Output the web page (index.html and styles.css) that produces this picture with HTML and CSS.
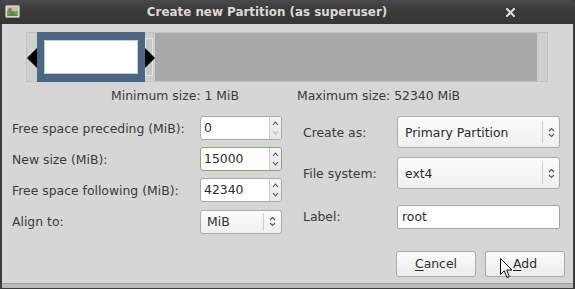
FILE: index.html
```html
<!DOCTYPE html>
<html>
<head>
<meta charset="utf-8">
<link rel="stylesheet" href="styles.css">
</head>
<body>
<div class="window">
  <div class="titlebar">
    <svg class="app-icon" width="15" height="13" viewBox="0 0 15 13">
      <rect x="0.5" y="0.5" width="14" height="12" rx="1" fill="#d8d8d8" stroke="#9a9a9a"/>
      <rect x="2" y="2" width="11" height="9" fill="#6fae4c"/>
      <rect x="2" y="2" width="11" height="4" fill="#9cc7e0"/>
      <circle cx="5" cy="5" r="2" fill="#e0533a"/>
      <path d="M2 11 L7 6 L13 11 Z" fill="#4f8f35"/>
      <circle cx="10" cy="4" r="1.3" fill="#f0c040"/>
    </svg>
    <div class="title">Create new Partition (as superuser)</div>
    <svg class="close" width="9" height="9" viewBox="0 0 9 9">
      <path d="M1 1 L8 8 M8 1 L1 8" stroke="#dcdcdc" stroke-width="2.2" stroke-linecap="square"/>
    </svg>
  </div>

  <div class="client">
    <div class="bar">
      <div class="bar-pre"></div>
      <div class="bar-part"><div class="bar-inner"></div></div>
      <div class="bar-gap"><div class="bar-gap-inner"></div></div>
      <div class="bar-free"></div>
      <div class="bar-end"></div>
      <svg class="handle handle-left" width="10" height="20" viewBox="0 0 10 20"><path d="M0 10 L10 0 L10 20 Z" fill="#000"/></svg>
      <svg class="handle handle-right" width="10" height="20" viewBox="0 0 10 20"><path d="M10 10 L0 0 L0 20 Z" fill="#000"/></svg>
    </div>

    <div class="sizes">
      <div>Minimum size: 1 MiB</div>
      <div>Maximum size: 52340 MiB</div>
    </div>

    <div class="form">
      <div class="col-left">
        <div class="label">Free space preceding (MiB):</div>
        <div class="spin">
          <div class="spin-val">0</div>
          <div class="spin-btns">
            <svg width="7" height="5" viewBox="0 0 7 5"><path d="M1 4 L3.5 1.2 L6 4" fill="none" stroke="#555" stroke-width="1.1"/></svg>
            <svg width="7" height="5" viewBox="0 0 7 5"><path d="M1 1 L3.5 3.8 L6 1" fill="none" stroke="#bbb" stroke-width="1.1"/></svg>
          </div>
        </div>

        <div class="label">New size (MiB):</div>
        <div class="spin focused">
          <div class="spin-val">15000</div>
          <div class="spin-btns">
            <svg width="7" height="5" viewBox="0 0 7 5"><path d="M1 4 L3.5 1.2 L6 4" fill="none" stroke="#555" stroke-width="1.1"/></svg>
            <svg width="7" height="5" viewBox="0 0 7 5"><path d="M1 1 L3.5 3.8 L6 1" fill="none" stroke="#555" stroke-width="1.1"/></svg>
          </div>
        </div>

        <div class="label">Free space following (MiB):</div>
        <div class="spin">
          <div class="spin-val">42340</div>
          <div class="spin-btns">
            <svg width="7" height="5" viewBox="0 0 7 5"><path d="M1 4 L3.5 1.2 L6 4" fill="none" stroke="#555" stroke-width="1.1"/></svg>
            <svg width="7" height="5" viewBox="0 0 7 5"><path d="M1 1 L3.5 3.8 L6 1" fill="none" stroke="#555" stroke-width="1.1"/></svg>
          </div>
        </div>

        <div class="label">Align to:</div>
        <div class="combo small">
          <div class="combo-val">MiB</div>
          <div class="combo-arrow">
            <svg width="7" height="11" viewBox="0 0 7 11"><path d="M1 4 L3.5 1.5 L6 4 M1 7 L3.5 9.5 L6 7" fill="none" stroke="#555" stroke-width="1.1"/></svg>
          </div>
        </div>
      </div>

      <div class="col-right">
        <div class="label">Create as:</div>
        <div class="combo">
          <div class="combo-val">Primary Partition</div>
          <div class="combo-arrow">
            <svg width="7" height="11" viewBox="0 0 7 11"><path d="M1 4 L3.5 1.5 L6 4 M1 7 L3.5 9.5 L6 7" fill="none" stroke="#555" stroke-width="1.1"/></svg>
          </div>
        </div>

        <div class="label">File system:</div>
        <div class="combo">
          <div class="combo-val">ext4</div>
          <div class="combo-arrow">
            <svg width="7" height="11" viewBox="0 0 7 11"><path d="M1 4 L3.5 1.5 L6 4 M1 7 L3.5 9.5 L6 7" fill="none" stroke="#555" stroke-width="1.1"/></svg>
          </div>
        </div>

        <div class="label label-last">Label:</div>
        <div class="entry">root</div>
      </div>
    </div>

    <div class="buttons">
      <div class="btn"><u>C</u>ancel</div>
      <div class="btn"><u>A</u>dd</div>
    </div>
  </div>

  <svg class="cursor" width="13" height="21" viewBox="0 0 13 21">
    <path d="M0.5 0.5 L0.5 16.5 L4.3 12.8 L7 19.5 L9.3 18.5 L6.7 12 L12 12 Z" fill="#fff" stroke="#000" stroke-width="1" stroke-linejoin="round"/>
  </svg>
</div>
</body>
</html>
```

FILE: styles.css
```css
html, body {
  margin: 0;
  padding: 0;
}

body {
  width: 575px;
  height: 289px;
  overflow: hidden;
  background: #d6d6d6;
  font-family: "DejaVu Sans", sans-serif;
  font-size: 12.4px;
  color: #3a3a3a;
}

.window {
  position: relative;
  width: 575px;
  height: 289px;
  display: flex;
  flex-direction: column;
  background: #3c3c3c;
}

.titlebar {
  height: 24px;
  flex: none;
  display: flex;
  align-items: center;
  background: linear-gradient(#4a4a4a, #3a3a3a 40%, #363636);
  border-radius: 5px 5px 0 0;
  padding: 0 61px 0 5px;
}

.app-icon {
  flex: none;
  margin-top: -1px;
}

.title {
  flex: 1;
  text-align: center;
  color: #dcdad5;
  font-weight: bold;
  font-size: 11.9px;
  font-family: "DejaVu Sans", sans-serif;
}

.close {
  position: absolute;
  left: 506px;
  top: 8px;
}

.client {
  flex: 1;
  margin: 0 2px 0 2px;
  background: #d6d6d6;
  border-bottom: 1px solid #9e9e9e;
  box-shadow: 0 4px 0 #b9b9b9;
  margin-bottom: 5px;
  display: flex;
  flex-direction: column;
}

/* partition bar */
.bar {
  position: relative;
  margin: 8px 25px 0 24px;
  height: 50px;
  box-sizing: border-box;
  border: 1px solid #c2c2c2;
  display: flex;
}

.bar-pre,
.bar-end {
  width: 10px;
  background: #cfcfcf;
}

.bar-part {
  width: 108px;
  background: #4b6784;
  margin: -1px 0;
  display: flex;
  align-items: center;
  justify-content: center;
}

.bar-inner {
  width: 92px;
  height: 32px;
  background: #fff;
  border: 1px solid #c9ccd0;
  margin-top: -1px;
}

.bar-gap {
  width: 10px;
  background: #cdcdcd;
  display: flex;
  align-items: center;
}

.bar-gap-inner {
  width: 8px;
  height: 38px;
  box-sizing: border-box;
  border: 1px solid #e4e4e4;
  background: #c6c6c6;
}

.bar-free {
  flex: 1;
  background: #a9a9a9;
}

.handle {
  position: absolute;
  top: 15px;
}

.handle-left {
  left: 0;
}

.handle-right {
  left: 118px;
}

/* sizes */
.sizes {
  display: grid;
  grid-template-columns: 186px 1fr;
  padding-left: 109px;
  margin-top: 6px;
  line-height: 15px;
}

/* form */
.form {
  display: flex;
  margin-top: 13px;
  padding-left: 10px;
}

.col-left {
  display: grid;
  grid-template-columns: 188px 82px;
  grid-template-rows: repeat(4, 24px);
  row-gap: 7px;
  align-items: center;
}

.col-right {
  display: grid;
  grid-template-columns: 94px 163px;
  grid-template-rows: 32px 32px 31px;
  row-gap: 9px;
  align-items: center;
  margin-left: 21px;
}

.label {
  white-space: nowrap;
  color: #3a3a3a;
}

.col-right .label {
  margin-top: 1px;
}

.col-right .label-last {
  align-self: end;
  line-height: 24px;
  margin-top: 0;
}

.spin {
  height: 24px;
  box-sizing: border-box;
  display: flex;
  border: 1px solid #a9a9a9;
  border-radius: 3px;
  background: #fff;
  overflow: hidden;
}

.spin.focused {
  border-color: #86a965;
}

.spin-val {
  flex: 1;
  padding-left: 3px;
  line-height: 22px;
  color: #2c2c2c;
}

.spin-btns {
  width: 12px;
  border-left: 1px solid #cacaca;
  background: linear-gradient(#f4f4f4, #e6e6e6);
  display: flex;
  flex-direction: column;
  align-items: center;
  justify-content: space-around;
  padding: 2px 0;
  box-sizing: border-box;
}

.combo {
  height: 32px;
  box-sizing: border-box;
  display: flex;
  align-items: center;
  border: 1px solid #ababab;
  border-radius: 3px;
  background: linear-gradient(#fcfcfc, #efefef);
  color: #2c2c2c;
}

.combo.small {
  height: 24px;
  margin-top: 1px;
}

.combo-val {
  flex: 1;
  padding-left: 7px;
}

.combo.small .combo-val {
  padding-left: 6px;
}

.combo-arrow {
  width: 16px;
  align-self: stretch;
  margin: 4px 0;
  border-left: 1px solid #cdcdcd;
  display: flex;
  align-items: center;
  justify-content: center;
}

.combo.small .combo-arrow {
  width: 17px;
  margin: 2px 0;
}

.entry {
  align-self: end;
  height: 24px;
  box-sizing: border-box;
  border: 1px solid #a5a5a5;
  border-radius: 2px;
  background: #fff;
  padding-left: 4px;
  line-height: 22px;
  color: #2c2c2c;
}

/* buttons */
.buttons {
  display: flex;
  justify-content: flex-end;
  gap: 9px;
  margin-top: 18px;
  padding-right: 8px;
}

.btn {
  width: 80px;
  height: 26px;
  box-sizing: border-box;
  border: 1px solid #a9a9a9;
  border-radius: 3px;
  background: linear-gradient(#fbfbfb, #ebebeb);
  text-align: center;
  line-height: 24px;
  color: #2c2c2c;
}

.btn u {
  text-decoration-thickness: 1px;
  text-underline-offset: 2px;
}

.cursor {
  position: absolute;
  left: 500px;
  top: 258px;
}
```
